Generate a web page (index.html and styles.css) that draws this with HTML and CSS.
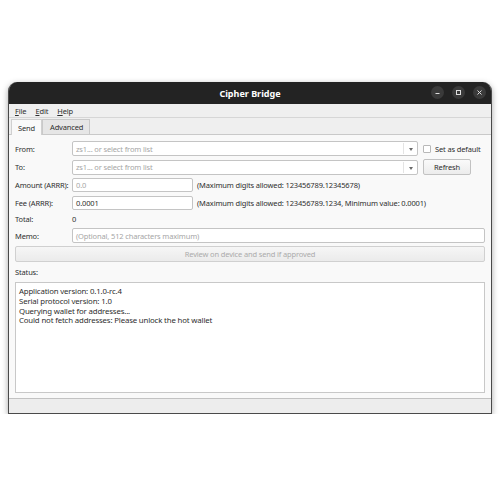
FILE: index.html
```html
<!DOCTYPE html>
<html>
<head>
<meta charset="utf-8">
<link rel="stylesheet" href="styles.css">
</head>
<body>
<div class="window">
  <div class="titlebar">
    <span class="title">Cipher Bridge</span>
    <div class="controls">
      <span class="ctl"><svg width="13" height="13" viewBox="0 0 13 13"><line x1="4.5" y1="7.5" x2="8.5" y2="7.5" stroke="#ddd" stroke-width="1"/></svg></span>
      <span class="ctl"><svg width="13" height="13" viewBox="0 0 13 13"><rect x="4.5" y="4.5" width="4" height="4" fill="none" stroke="#ddd" stroke-width="1"/></svg></span>
      <span class="ctl"><svg width="13" height="13" viewBox="0 0 13 13"><path d="M4.5 4.5 L8.5 8.5 M8.5 4.5 L4.5 8.5" stroke="#ddd" stroke-width="1"/></svg></span>
    </div>
  </div>
  <div class="menubar">
    <span class="menu"><u>F</u>ile</span>
    <span class="menu"><u>E</u>dit</span>
    <span class="menu"><u>H</u>elp</span>
  </div>
  <div class="tabs">
    <span class="tab active">Send</span>
    <span class="tab">Advanced</span>
  </div>
  <div class="panel">
    <div class="form">
      <span class="label">From:</span>
      <div class="combo"><span class="ph">zs1... or select from list</span><span class="arrow"></span></div>
      <label class="check"><span class="box"></span>Set as default</label>

      <span class="label">To:</span>
      <div class="combo"><span class="ph">zs1... or select from list</span><span class="arrow"></span></div>
      <button class="btn">Refresh</button>
    </div>
    <div class="form2">
      <span class="label">Amount (ARRR):</span>
      <div class="field"><span class="ph">0.0</span></div>
      <span class="note">(Maximum digits allowed: 123456789.12345678)</span>

      <span class="label">Fee (ARRR):</span>
      <div class="field"><span class="val">0.0001</span></div>
      <span class="note">(Maximum digits allowed: 123456789.1234, Minimum value: 0.0001)</span>

      <span class="label total">Total:</span>
      <span class="val total">0</span>
      <span></span>

      <span class="label">Memo:</span>
      <div class="field wide"><span class="ph">(Optional, 512 characters maximum)</span></div>
    </div>
    <button class="review">Review on device and send if approved</button>
    <div class="status-label">Status:</div>
    <div class="log">
      <div>Application version: 0.1.0-rc.4</div>
      <div>Serial protocol version: 1.0</div>
      <div>Querying wallet for addresses...</div>
      <div>Could not fetch addresses: Please unlock the hot wallet</div>
    </div>
  </div>
  <div class="statusbar"></div>
</div>
</body>
</html>
```

FILE: styles.css
```css
html, body {
  margin: 0;
  padding: 0;
  background: #ffffff;
}
body {
  font-family: "Noto Sans", "Open Sans", sans-serif;
  font-size: 7.5px;
  letter-spacing: -0.15px;
  color: #2e2e2e;
  white-space: nowrap;
}
.window {
  margin: 82px 0 0 8px;
  width: 484px;
  height: 332px;
  box-sizing: border-box;
  border: 1px solid #4a4a4a;
  border-top: none;
  border-radius: 9px 9px 0 0;
  background: #efefef;
  box-shadow: 0 2px 6px rgba(0,0,0,0.35);
  display: flex;
  flex-direction: column;
  overflow: hidden;
}
.titlebar {
  height: 22px;
  flex: none;
  background: #232323;
  display: flex;
  align-items: center;
  justify-content: center;
  position: relative;
}
.title {
  color: #ffffff;
  font-weight: bold;
  font-size: 9px;
  letter-spacing: 0;
}
.controls {
  position: absolute;
  right: 5px;
  top: 4px;
  display: flex;
  gap: 8px;
}
.ctl {
  width: 13px;
  height: 13px;
  border-radius: 50%;
  background: #3a3a3a;
  display: block;
}
.ctl svg { display: block; }
.menubar {
  height: 13px;
  flex: none;
  display: flex;
  align-items: center;
  padding-left: 6px;
  gap: 9px;
  border-bottom: 1px solid #d6d6d6;
  background: #efefef;
}
.menu u { text-decoration: underline; }
.tabs {
  height: 16px;
  flex: none;
  display: flex;
  padding-left: 2px;
  align-items: flex-end;
  background: #efefef;
}
.tab {
  height: 15px;
  box-sizing: border-box;
  display: flex;
  align-items: center;
  padding: 0 6px 0 7px;
  border: 1px solid #c9c9c9;
  border-bottom: none;
  background: #e6e6e6;
}
.tab.active {
  height: 16px;
  background: #f9f9f9;
  border-color: #d0d0d0;
  padding: 0 6px;
  margin-bottom: -1px;
  position: relative;
  z-index: 1;
}
.panel {
  flex: 1;
  border-top: 1px solid #c9c9c9;
  border-bottom: 1px solid #c2c2c2;
  background: #f9f9f9;
  padding: 6px 6px 5px 6px;
  display: flex;
  flex-direction: column;
}
.form {
  display: grid;
  grid-template-columns: 53px 346px 1fr;
  column-gap: 4px;
  row-gap: 3px;
  align-items: center;
}
.form2 {
  display: grid;
  grid-template-columns: 53px 121px 1fr;
  column-gap: 4px;
  row-gap: 4px;
  align-items: center;
  margin-top: 3px;
}
.combo, .field {
  height: 15px;
  box-sizing: border-box;
  background: #ffffff;
  border: 1px solid #c4c4c4;
  border-radius: 2px;
  display: flex;
  align-items: center;
  padding-left: 3px;
  position: relative;
}
.field { height: 14px; }
.field.wide { grid-column: 2 / 4; height: 15px; }
.ph { color: #a6a6a6; }
.val { color: #2e2e2e; }
.arrow {
  position: absolute;
  right: 4px;
  top: 6px;
  width: 0;
  height: 0;
  border-left: 2.5px solid transparent;
  border-right: 2.5px solid transparent;
  border-top: 3px solid #6a6a6a;
}
.arrow::before {
  content: "";
  position: absolute;
  left: -8px;
  top: -8px;
  width: 1px;
  height: 11px;
  background: #e4e4e4;
}
.check {
  display: flex;
  align-items: center;
  gap: 4px;
  margin-left: 1px;
}
.box {
  width: 8px;
  height: 8px;
  box-sizing: border-box;
  border: 1px solid #b8b8b8;
  border-radius: 1px;
  background: #ffffff;
}
.btn {
  width: 48px;
  height: 16px;
  margin-left: 1px;
  box-sizing: border-box;
  font-family: inherit;
  font-size: 7.5px;
  letter-spacing: -0.15px;
  color: #2e2e2e;
  background: linear-gradient(#fafafa, #ececec);
  border: 1px solid #c2c2c2;
  border-radius: 2px;
  padding: 0;
}
.total { line-height: 10px; }
.review {
  margin-top: 3px;
  height: 16px;
  box-sizing: border-box;
  font-family: inherit;
  font-size: 7.5px;
  letter-spacing: -0.15px;
  color: #ababab;
  background: linear-gradient(#f6f6f6, #ebebeb);
  border: 1px solid #d0d0d0;
  border-radius: 2px;
  padding: 0;
}
.status-label {
  margin-top: 3px;
  height: 14px;
  display: flex;
  align-items: center;
}
.log {
  margin-top: 3px;
  flex: 1;
  background: #ffffff;
  border: 1px solid #c8c8c8;
  padding: 4px 3px;
  line-height: 9.8px;
  font-size: 7.8px;
  color: #2e2e2e;
}
.statusbar {
  height: 14px;
  flex: none;
  background: #ededed;
}
```
